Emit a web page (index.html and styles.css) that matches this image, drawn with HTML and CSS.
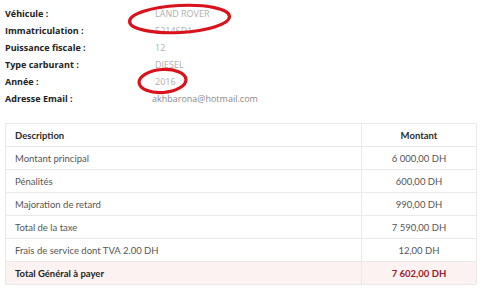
FILE: index.html
```html
<!DOCTYPE html>
<html lang="fr">
<head>
<meta charset="utf-8">
<link rel="stylesheet" href="styles.css">
</head>
<body>
<div class="page">
  <dl class="info">
    <dt>Véhicule :</dt><dd>LAND ROVER</dd>
    <dt>Immatriculation :</dt><dd>52146D1</dd>
    <dt>Puissance fiscale :</dt><dd>12</dd>
    <dt>Type carburant :</dt><dd>DIESEL</dd>
    <dt>Année :</dt><dd>2016</dd>
    <dt>Adresse Email :</dt><dd class="email">akhbarona@hotmail.com</dd>
  </dl>

  <table class="recap">
    <thead>
      <tr><th class="desc">Description</th><th class="amt">Montant</th></tr>
    </thead>
    <tbody>
      <tr><td>Montant principal</td><td class="amt">6 000,00 DH</td></tr>
      <tr><td>Pénalités</td><td class="amt">600,00 DH</td></tr>
      <tr><td>Majoration de retard</td><td class="amt">990,00 DH</td></tr>
      <tr><td>Total de la taxe</td><td class="amt">7 590,00 DH</td></tr>
      <tr><td>Frais de service dont TVA 2.00 DH</td><td class="amt">12,00 DH</td></tr>
      <tr class="total"><td>Total Général à payer</td><td class="amt">7 602,00 DH</td></tr>
    </tbody>
  </table>

  <svg class="marks" width="497" height="110" viewBox="0 0 497 110">
    <ellipse cx="179.5" cy="19" rx="50" ry="13.5" transform="rotate(-3 179.5 19)" />
    <ellipse cx="162.5" cy="81" rx="23.5" ry="11.5" transform="rotate(-4 162.5 81)" />
  </svg>
</div>
</body>
</html>
```

FILE: styles.css
```css
html, body {
  margin: 0;
  padding: 0;
  background: #ffffff;
}

.page {
  position: relative;
  width: 497px;
  height: 293px;
  padding: 5px 0 0 5px;
  box-sizing: border-box;
}

.info {
  display: grid;
  grid-template-columns: 150px auto;
  margin: 0;
  font-family: "Open Sans", sans-serif;
  font-size: 9px;
  line-height: 17px;
}

.info dt {
  font-weight: 700;
  color: #222;
}

.info dd {
  margin: 0;
  color: #b0b0b0;
}

.info dd.email {
  margin-left: -3px;
  color: #8a8a8a;
}

.recap {
  margin-top: 16px;
  width: 472px;
  border-collapse: collapse;
  font-family: "Lato", sans-serif;
  font-size: 9.5px;
  color: #555;
}

.recap th,
.recap td {
  height: 22px;
  padding: 0 9px;
  border: 1px solid #e9e9e9;
  text-align: left;
  font-weight: 400;
}

.recap th {
  font-weight: 700;
  color: #2b2b2b;
}

.recap .amt {
  width: 96px;
  text-align: center;
}

.recap .total td {
  background: #fdf2f2;
  font-weight: 700;
  color: #222;
}

.recap .total td.amt {
  color: #9b1b2a;
}

.marks {
  position: absolute;
  left: 0;
  top: 0;
  pointer-events: none;
}

.marks ellipse {
  fill: none;
  stroke: #d9121c;
  stroke-width: 3.2;
}
```
